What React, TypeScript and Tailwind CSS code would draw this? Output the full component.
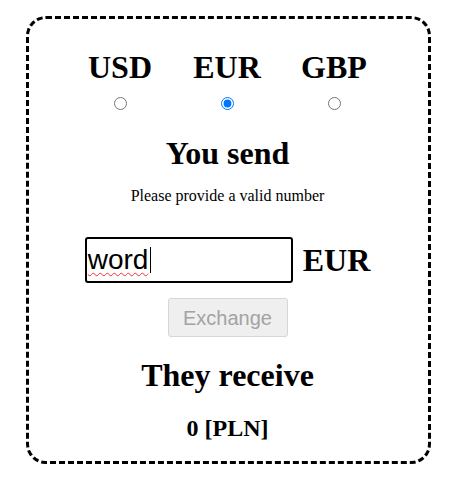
import React, { useState } from 'react';

const currencies = ['USD', 'EUR', 'GBP'];

export default function App() {
  const [currency, setCurrency] = useState('EUR');

  return (
    <div className="w-[465px] h-[489px] bg-white font-['Liberation_Serif',serif] text-black pt-[16px] pl-[26px]">
      <div className="w-[405px] h-[448px] border-[3px] border-dashed border-black rounded-[20px] flex flex-col items-center pr-[2px]">
        {/* currency picker */}
        <div className="flex justify-center mt-[32px] ml-[-1px]">
          {currencies.map((c) => (
            <label key={c} className="w-[107px] flex flex-col items-center cursor-pointer">
              <span className="text-[32px] leading-[32px] font-bold">{c}</span>
              <input
                type="radio"
                name="currency"
                checked={currency === c}
                onChange={() => setCurrency(c)}
                className="m-0 mt-[14px] w-[13px] h-[13px] accent-[#0075ff]"
              />
            </label>
          ))}
        </div>

        <h2 className="mt-[27px] text-[32px] leading-[32px] font-bold">You send</h2>
        <p className="mt-[18px] text-[16px] leading-[18px]">Please provide a valid number</p>

        <div className="mt-[32px] flex items-center gap-[10px]">
          <div className="w-[208px] h-[46px] border-2 border-black rounded-[3px] flex items-center pl-[1px] font-['Liberation_Sans',Arial,sans-serif] text-[28px] leading-[32px]">
            <span className="underline decoration-wavy decoration-red-500 decoration-1 underline-offset-[3px]">word</span>
            <span className="w-px h-[26px] bg-black ml-[2px]" />
          </div>
          <span className="text-[32px] leading-[32px] font-bold">{currency}</span>
        </div>

        <button
          disabled
          className="mt-[15px] w-[120px] h-[39px] bg-[#efefef] border border-[#d6d6d6] rounded-[3px] text-[20px] text-[#a3a3a3] font-['Liberation_Sans',Arial,sans-serif]"
        >
          Exchange
        </button>

        <h2 className="mt-[22px] text-[32px] leading-[32px] font-bold">They receive</h2>
        <h3 className="mt-[25px] text-[24px] leading-[24px] font-bold">0 [PLN]</h3>
      </div>
    </div>
  );
}
